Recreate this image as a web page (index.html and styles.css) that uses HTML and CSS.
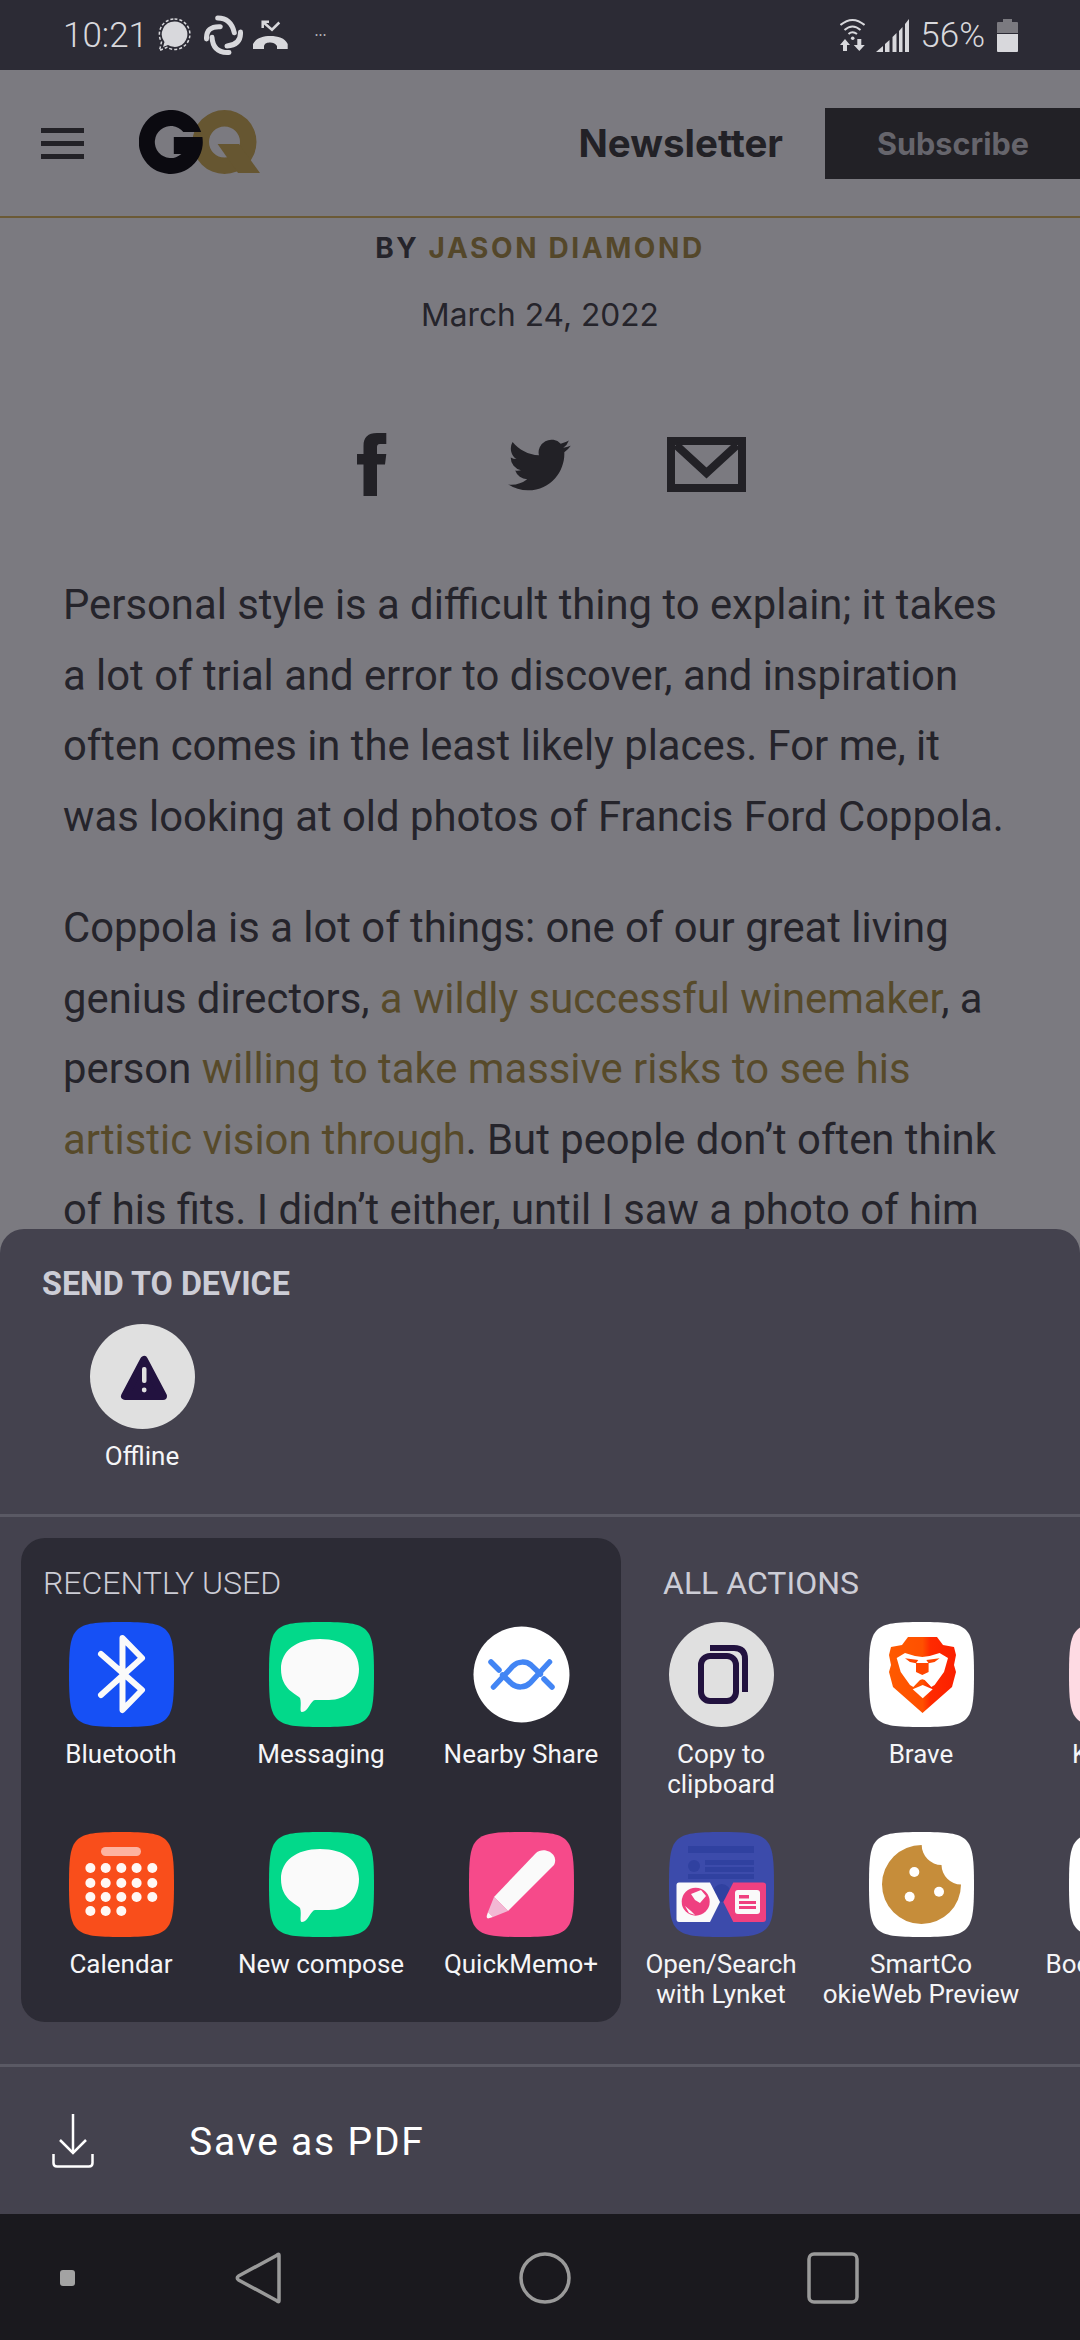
FILE: index.html
```html
<!DOCTYPE html>
<html lang="en">
<head>
<meta charset="utf-8">
<title>GQ share sheet</title>
<link rel="stylesheet" href="styles.css">
</head>
<body>
<svg class="defs" width="0" height="0" aria-hidden="true">
  <defs>
    <path id="squircle" d="M52.5 0C77 0 90 1 97 8C104 15 105 28 105 52.5C105 77 104 90 97 97C90 104 77 105 52.5 105C28 105 15 104 8 97C1 90 0 77 0 52.5C0 28 1 15 8 8C15 1 28 0 52.5 0Z"/>
    <path id="bubble" d="M51 17C76 17 90 29 90 47C90 66 77 78 60 78H46C42 78 39 90 33 90C30 90 33 82 31 76C28 72 12 68 12 47C12 29 27 17 51 17Z"/>
    <linearGradient id="brave" x1="0" x2="1" y1="0" y2="0">
      <stop offset="0" stop-color="#ff5a00"/><stop offset=".5" stop-color="#ff5000"/><stop offset=".62" stop-color="#ff2a00"/><stop offset="1" stop-color="#fb2000"/>
    </linearGradient>
  </defs>
</svg>
<div class="screen">
  <header class="status">
    <span class="status-time">10:21</span>
    <svg class="st-signal" width="33" height="34" viewBox="0 0 33 34"><path d="M16.500 3.500A12.700 12.700 0 1 1 10 27L5 29L6.500 24A12.700 12.700 0 0 1 16.500 3.500Z" fill="#d8d8dc"/><path d="M16.500 1A15.200 15.200 0 1 1 9 29.300L1.500 32.500L3.500 24A15.200 15.200 0 0 1 16.500 1Z" fill="none" stroke="#d8d8dc" stroke-width="1.500" stroke-dasharray="3 2"/></svg>
    <svg class="st-sync" width="39" height="40" viewBox="0 0 39 40" fill="none" stroke="#d8d8dc" stroke-width="5" stroke-linecap="round"><path d="M13.700 3Q27 3 30.300 17.700"/><path d="M36.500 17Q37 30 23 31"/><path d="M25 37.500Q9 38 8 22.300"/><path d="M2.500 24Q2 11 16.300 11.700"/></svg>
    <svg class="st-call" width="35" height="32" viewBox="0 0 35 32" fill="#d8d8dc"><path d="M9.700 9V2.700H16M9.700 2.700L19 10.700L26.300 3.500" fill="none" stroke="#d8d8dc" stroke-width="2.500"/><path d="M0 30V25C3 19 10 17 17.300 17C25 17 32 19 34.700 25V30H24V27C22 24 20 23.500 17.300 23.500C14 23.500 12 24 11 27V30Z"/></svg>
    <span class="st-more">•••</span>
    <div class="status-right">
      <svg class="st-wifi" width="25" height="34" viewBox="0 0 25 34" fill="none" stroke="#d8d8dc" stroke-width="2"><path d="M0.500 7Q12.500 -3 24.500 7"/><path d="M4.500 12Q12.500 5 20.500 12"/><path d="M8.500 16Q12.500 12.500 17 16"/><circle cx="12.700" cy="20.300" r="1.800" fill="#d8d8dc" stroke="none"/><path d="M0 27L5 21L10 27H7V33H3V27Z" fill="#d8d8dc" stroke="none"/><path d="M17.300 21H21.300V27H24.800L19.300 33L13.800 27H17.300Z" fill="#d8d8dc" stroke="none"/></svg>
      <svg class="st-bars" width="33" height="33" viewBox="0 0 33 33" fill="#d8d8dc"><path d="M0 33L7 27V33Z"/><path d="M9 25L13.500 21V33H9Z"/><path d="M16.500 18L20.500 14V33H16.500Z"/><path d="M23 12L26.500 8V33H23Z" /><path d="M29 5L33 0V33H29Z"/></svg>
      <span class="status-pct">56%</span>
      <svg class="st-batt" width="21" height="33" viewBox="0 0 21 33"><path d="M6 0H15V3H20Q21 3 21 4V14H0V4Q0 3 1 3H6Z" fill="#7b7a80"/><path d="M0 15H21V32Q21 33 20 33H1Q0 33 0 32Z" fill="#d8d8dc"/></svg>
    </div>
  </header>

  <div class="stage">
    <div class="site-head">
      <div class="burger"><i></i><i></i><i></i></div>
      <svg class="gq" width="122" height="66" viewBox="0 0 122 66">
        <path fill="#665631" fill-rule="evenodd" d="M85.500 0A32 32 0 1 1 85.500 64A32 32 0 1 1 85.500 0ZM85.500 16.500A15.500 15.500 0 1 0 85.500 47.500A15.500 15.500 0 1 0 85.500 16.500Z"/>
        <path fill="#665631" d="M78.600 34H100L121 63H99Z"/>
        <path fill="#0b0a10" d="M62.200 22A32 32 0 1 0 63.400 27L34.800 27V44H42.400A16 16 0 1 1 44.300 22Z"/>
      </svg>
      <a class="news">Newsletter</a>
      <a class="subscribe">Subscribe</a>
    </div>
    <article class="article">
      <p class="byline">BY <span class="gold">JASON DIAMOND</span></p>
      <p class="date">March 24, 2022</p>
      <div class="social">
        <svg width="30" height="63" viewBox="0 0 30 63" fill="#222126"><path d="M6.500 63V31.500H0V21H6.500V13C6.500 4 11 0 20 0H29.300V11H23C20.500 11 20 12.500 20 14V21H29.300L28 31.500H20V63Z"/></svg>
        <svg class="tw" width="63" height="52" viewBox="0 0 24 20" fill="#222126"><path transform="translate(0 -2)" d="M23.953 4.570a10 10 0 01-2.825.775 4.958 4.958 0 002.163-2.723c-.951.555-2.005.959-3.127 1.184a4.920 4.920 0 00-8.384 4.482C7.690 8.095 4.067 6.130 1.640 3.162a4.822 4.822 0 00-.666 2.475c0 1.710.870 3.213 2.188 4.096a4.904 4.904 0 01-2.228-.616v.060a4.923 4.923 0 003.946 4.827 4.996 4.996 0 01-2.212.085 4.936 4.936 0 004.604 3.417 9.867 9.867 0 01-6.102 2.105c-.390 0-.779-.023-1.170-.067a13.995 13.995 0 007.557 2.209c9.053 0 13.998-7.496 13.998-13.985 0-.210 0-.420-.015-.630A9.935 9.935 0 0024 4.590z"/></svg>
        <svg class="ml" width="79" height="55" viewBox="0 0 79 55" fill="none" stroke="#222126" stroke-width="8"><rect x="4" y="4" width="71" height="47"/><path d="M9 8L39.500 36L70 8"/></svg>
      </div>
      <p class="para">Personal style is a difficult thing to explain; it takes a lot of trial and error to discover, and inspiration often comes in the least likely places. For me, it was looking at old photos of Francis Ford Coppola.</p>
      <p class="para">Coppola is a lot of things: one of our great living genius directors, <span class="link">a wildly successful winemaker</span>, a person <span class="link">willing to take massive risks to see his artistic vision through</span>. But people don’t often think of his fits. I didn’t either, until I saw a photo of him</p>
    </article>

    <section class="sheet">
      <div class="send">
        <h2 class="send-title">SEND TO DEVICE</h2>
        <div class="app offline">
          <svg class="ico" viewBox="0 0 105 105"><circle cx="52.500" cy="52.500" r="52.500" fill="#e0e0e0"/><path d="M54 36L35 72H73Z" fill="#22123f" stroke="#22123f" stroke-width="8" stroke-linejoin="round"/><rect x="52" y="43" width="4.500" height="16" rx="2" fill="#e0e0e0"/><circle cx="54.200" cy="66" r="2.400" fill="#e0e0e0"/></svg>
          <span class="app-name">Offline</span>
        </div>
      </div>
      <div class="shelves">
        <div class="recent">
          <h3 class="shelf-title">RECENTLY USED</h3>
          <div class="apps">
            <div class="app">
              <svg class="ico" viewBox="0 0 105 105"><use href="#squircle" fill="#1650f5"/><path d="M32 32L73 68L53.500 88V16L73 36L32 73" fill="none" stroke="#fafafa" stroke-width="6" stroke-linecap="round" stroke-linejoin="round"/></svg>
              <span class="app-name">Bluetooth</span>
            </div>
            <div class="app">
              <svg class="ico" viewBox="0 0 105 105"><use href="#squircle" fill="#02d98a"/><use href="#bubble" fill="#fafafa"/></svg>
              <span class="app-name">Messaging</span>
            </div>
            <div class="app">
              <svg class="ico" viewBox="0 0 105 105"><circle cx="52.500" cy="52.500" r="48" fill="#fff"/><g fill="none" stroke="#4285f4" stroke-width="5.500" stroke-linecap="round"><path d="M24.500 65L44 44C49 39 57 39 62 43L71.400 52"/><path d="M22 40L30 48"/><path d="M24.500 65L44 44C49 39 57 39 62 43L71.400 52" transform="rotate(180 52.500 52.500)"/><path d="M22 40L30 48" transform="rotate(180 52.500 52.500)"/></g></svg>
              <span class="app-name">Nearby Share</span>
            </div>
            <div class="app">
              <svg class="ico" viewBox="0 0 105 105"><use href="#squircle" fill="#f94e1b"/><rect x="32" y="15" width="40" height="9" rx="4.500" fill="#fdb3a0"/>
                <g fill="#fff8f5"><circle cx="21.400" cy="36" r="5"/><circle cx="36.700" cy="36" r="5"/><circle cx="52.300" cy="36" r="5"/><circle cx="67.600" cy="36" r="5"/><circle cx="83.300" cy="36" r="5"/><circle cx="21.400" cy="51" r="5"/><circle cx="36.700" cy="51" r="5"/><circle cx="52.300" cy="51" r="5"/><circle cx="67.600" cy="51" r="5"/><circle cx="83.300" cy="51" r="5"/><circle cx="21.400" cy="65" r="5"/><circle cx="36.700" cy="65" r="5"/><circle cx="52.300" cy="65" r="5"/><circle cx="67.600" cy="65" r="5"/><circle cx="83.300" cy="65" r="5"/><circle cx="21.400" cy="79" r="5"/><circle cx="36.700" cy="79" r="5"/><circle cx="52.300" cy="79" r="5"/></g></svg>
              <span class="app-name">Calendar</span>
            </div>
            <div class="app">
              <svg class="ico" viewBox="0 0 105 105"><use href="#squircle" fill="#02d98a"/><use href="#bubble" fill="#fafafa"/></svg>
              <span class="app-name">New compose</span>
            </div>
            <div class="app">
              <svg class="ico" viewBox="0 0 105 105"><use href="#squircle" fill="#f64a8a"/><path d="M25 65L67 21C72 16 82 18 85 24C87 28 86 31 85 33L39 79Z" fill="#fafafa"/><path d="M25 65L39 79L24 85L19 80Z" fill="#f2b8d4"/><path d="M19 80L24 85L19 86.500Q17 85.500 18 83Z" fill="#fafafa"/></svg>
              <span class="app-name">QuickMemo+</span>
            </div>
          </div>
        </div>
        <div class="all">
          <h3 class="shelf-title all-title">ALL ACTIONS</h3>
          <div class="apps apps-wide">
            <div class="app">
              <svg class="ico" viewBox="0 0 105 105"><circle cx="52.500" cy="52.500" r="52.500" fill="#e0e0e0"/><rect x="32" y="34" width="35" height="45" rx="9" fill="none" stroke="#22123f" stroke-width="6"/><path d="M41 26H65Q76 26 76 37V70" fill="none" stroke="#22123f" stroke-width="6"/></svg>
              <span class="app-name">Copy to<br>clipboard</span>
            </div>
            <div class="app">
              <svg class="ico" viewBox="0 0 105 105"><use href="#squircle" fill="#fff"/><path d="M39 15H68L74 23L85 25L87 33L85 43L87 50L83 65L53.500 91L24 65L20 50L22 43L20 33L22 25L33 23Z" fill="url(#brave)"/><path d="M36 31L46 34L53.300 35L60.600 34L70.600 31L79 36L75 50L65.600 63L62.300 65L55.700 58L53.300 57.300L51 58L44.300 65L41 63L31.700 50L27.700 36Z" fill="#fff"/><path d="M36 36.300L49.300 38L47 41.300L41 40ZM70.600 36.300L57.300 38L59.600 41.300L65.600 40ZM47 41H59.600V50L53.300 53L47 50Z" fill="#ff4500"/><path d="M43.700 67.300L53.700 63L63.700 67.300L53.700 76.300Z" fill="#fff"/></svg>
              <span class="app-name">Brave</span>
            </div>
            <div class="app">
              <svg class="ico" viewBox="0 0 105 105"><use href="#squircle" fill="#fedae3"/></svg>
              <span class="app-name">Keybase</span>
            </div>
            <div class="app">
              <svg class="ico" viewBox="0 0 105 105"><use href="#squircle" fill="#3c4bab"/><g fill="#3041a0"><rect x="19" y="14" width="66" height="7"/><circle cx="25" cy="34" r="6"/><rect x="36" y="28" width="49" height="5"/><rect x="36" y="35" width="49" height="5"/><rect x="19" y="42" width="66" height="5"/><circle cx="52.700" cy="61" r="9"/></g><path d="M10 50.500H41L51 70L41 90H10Q7.500 90 7.500 87V53Q7.500 50.500 10 50.500Z" fill="#fafafa"/><path d="M94 50.500H64.300L54.300 70L64.300 90H94Q97 90 97 87V53Q97 50.500 94 50.500Z" fill="#ef4080"/><circle cx="26.700" cy="69.700" r="14" fill="#ef4080"/><path d="M22 62L32 58L37 64L31 71L26 68ZM16 74L22 79L26 83L20 81Z" fill="#fafafa"/><rect x="66" y="58" width="25" height="24" rx="3" fill="#fafafa"/><g fill="#ef4080"><rect x="70" y="63" width="10" height="3.500"/><rect x="70" y="69" width="17" height="3"/><rect x="70" y="74" width="17" height="3"/></g></svg>
              <span class="app-name">Open/Search<br>with Lynket</span>
            </div>
            <div class="app">
              <svg class="ico" viewBox="0 0 105 105"><use href="#squircle" fill="#fff"/><path d="M52.700 13A20 20 0 0 0 72.500 33A20 20 0 0 0 92 52.500A39.500 39.500 0 1 1 52.700 13Z" fill="#c68d3a"/><circle cx="45.300" cy="40" r="5" fill="#fff"/><circle cx="70" cy="59.700" r="5" fill="#fff"/><circle cx="40.700" cy="64.700" r="5" fill="#fff"/></svg>
              <span class="app-name">SmartCo<br>okieWeb Preview</span>
            </div>
            <div class="app">
              <svg class="ico" viewBox="0 0 105 105"><use href="#squircle" fill="#fff"/></svg>
              <span class="app-name">Book Tracker</span>
            </div>
          </div>
        </div>
      </div>
      <div class="save">
        <svg class="save-ico" width="42" height="54" viewBox="0 0 42 54" fill="none" stroke="#fff" stroke-width="2.500"><path d="M21 0V39"/><path d="M8 26L21 39L34 26"/><path d="M1.500 40V49Q1.500 52.500 5 52.500H37Q40.500 52.500 40.500 49V40"/></svg>
        <span class="save-text">Save as PDF</span>
      </div>
    </section>
  </div>

  <nav class="nav">
    <span class="nav-dot"></span>
    <svg class="nav-back" width="46" height="52" viewBox="0 0 46 52" fill="none" stroke="#9a9a9a" stroke-width="3.500" stroke-linejoin="round"><path d="M44 3.500Q44 1 41.500 3.500L3.500 24Q1 26 3.500 28L41.500 48.500Q44 51 44 48.500Z"/></svg>
    <svg class="nav-home" width="52" height="52" viewBox="0 0 52 52" fill="none" stroke="#9a9a9a" stroke-width="3.500"><circle cx="26" cy="26" r="24"/></svg>
    <svg class="nav-recent" width="52" height="52" viewBox="0 0 52 52" fill="none" stroke="#9a9a9a" stroke-width="3.500"><rect x="2" y="2" width="48" height="48" rx="5"/></svg>
  </nav>
</div>
</body>
</html>
```

FILE: styles.css
```css
* { box-sizing: border-box; }
html, body { margin: 0; padding: 0; background: #7b7a80; }
.defs { position: absolute; }
.screen { width: 1080px; height: 2340px; display: flex; flex-direction: column; overflow: hidden; font-family: Roboto, sans-serif; }

.status { height: 70px; flex: none; background: #2c2b35; display: flex; align-items: center; padding-left: 63px; padding-right: 62px; color: #d8d8dc; }
.status-time { font-size: 35px; font-weight: 300; }
.st-signal { margin-left: 10px; }
.st-sync { margin-left: 13px; }
.st-call { margin-left: 10px; }
.st-more { margin-left: 27px; font-size: 9px; letter-spacing: 1px; color: #b8b8bc; }
.status-right { margin-left: auto; display: flex; align-items: center; }
.st-bars { margin-left: 11px; }
.status-pct { margin-left: 11px; font-size: 35px; font-weight: 300; }
.st-batt { margin-left: 12px; }

.stage { flex: 1; position: relative; overflow: hidden; background: #7b7a80; }
.site-head { height: 148px; border-bottom: 2px solid #6b5a36; display: flex; align-items: center; padding-left: 41px; }
.burger { width: 43px; display: flex; flex-direction: column; gap: 8px; }
.burger i { display: block; height: 5px; background: #222126; }
.gq { margin-left: 55px; }
.news { margin-left: auto; font-family: Inter, sans-serif; font-weight: 700; font-size: 38.500px; color: #222126; }
.subscribe { margin-left: 42px; width: 255px; height: 71px; background: #222126; color: #66656c; font-family: Inter, sans-serif; font-weight: 700; font-size: 30.600px; display: flex; align-items: center; padding-left: 52px; }

.article { color: #25242b; }
.byline { margin: 10px 0 0; text-align: center; font-family: Inter, sans-serif; font-weight: 700; font-size: 28px; letter-spacing: 2.600px; line-height: 40px; }
.gold { color: #54472a; }
.date { margin: 27px 0 0; text-align: center; font-family: Inter, sans-serif; font-size: 31.700px; line-height: 40px; }
.social { display: flex; align-items: center; margin: 98px 0 0 357px; height: 63px; }
.tw { margin-left: 121px; }
.ml { margin-left: 96px; }
.para { margin: 0 0 41px; padding: 0 70px 0 63px; font-size: 41.800px; line-height: 70.500px; }
.social + .para { margin-top: 74px; }
.link { color: #574a2a; }

.sheet { position: absolute; left: 0; right: 0; bottom: 0; height: 985px; background: #44424e; border-radius: 24px 24px 0 0; overflow: hidden; color: #fff; }
.send { height: 288px; border-bottom: 3px solid #5a5964; padding: 34px 0 0 42px; }
.send-title { margin: 0; font-size: 32.300px; font-weight: 700; line-height: 42px; color: #cdcdd6; }
.offline { margin-top: 19px; }
.app { display: flex; flex-direction: column; align-items: center; width: 200px; }
.ico { width: 105px; height: 105px; display: block; flex: none; }
.app-name { margin-top: 12px; font-size: 26px; line-height: 30px; text-align: center; color: #f5f5f7; white-space: nowrap; }

.shelves { display: flex; padding: 21px 0 0 21px; height: 547px; }
.recent { flex: none; width: 600px; height: 484px; background: #2c2b35; border-radius: 24px; padding-top: 27px; }
.all { flex: none; padding-top: 27px; }
.shelf-title { margin: 0 0 0 22px; font-size: 32px; font-weight: 300; line-height: 36px; color: #cdcdd6; }
.all-title { margin-left: 42px; font-weight: 400; }
.apps { display: grid; grid-template-columns: repeat(3, 200px); row-gap: 31px; margin-top: 21px; }
.apps .app { height: 179px; }

.save { height: 150px; border-top: 3px solid #5a5964; display: flex; align-items: center; padding-left: 52px; }
.save-text { margin: 2px 0 0 95px; font-size: 39px; letter-spacing: 1.800px; color: #fff; }

.nav { height: 126px; flex: none; background: #1a191e; display: flex; align-items: center; padding: 2px 0 0 60px; }
.nav-dot { width: 15px; height: 16px; background: #a3a3a3; border-radius: 3px; }
.nav-back { margin-left: 160px; }
.nav-home { margin-left: 238px; }
.nav-recent { margin-left: 236px; }
```
